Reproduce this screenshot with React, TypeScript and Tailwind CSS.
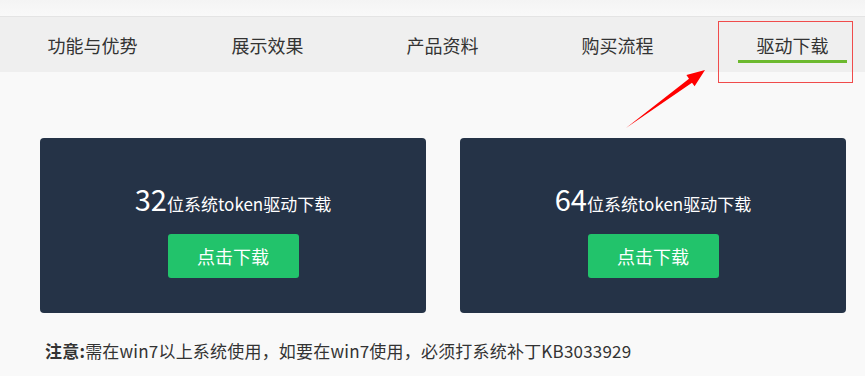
const NAV_ITEMS = [
  { label: "功能与优势" },
  { label: "展示效果" },
  { label: "产品资料" },
  { label: "购买流程" },
  { label: "驱动下载", active: true },
];

const DRIVERS = [
  { bits: "32", label: "位系统token驱动下载" },
  { bits: "64", label: "位系统token驱动下载" },
];

function DriverCard({ bits, label }: { bits: string; label: string }) {
  return (
    <div className="flex h-[175px] w-[386px] flex-col items-center rounded-[4px] bg-[#253347] pt-[44px]">
      <div className="flex h-[32px] items-baseline text-white">
        <span className="text-[29px] leading-[32px]">{bits}</span>
        <span className="text-[17px] leading-[32px]">{label}</span>
      </div>
      <button
        type="button"
        className="mt-[20px] flex h-[44px] w-[131px] items-center justify-center rounded-[3px] bg-[#22c36b] text-[18px] text-white"
      >
        点击下载
      </button>
    </div>
  );
}

export default function App() {
  return (
    <div className="relative h-[376px] w-[865px] overflow-hidden bg-[#f9f9f9] font-['Noto_Sans_CJK_SC','Noto_Sans',sans-serif] text-[#333]">
      {/* top strip */}
      <div className="h-[17px] border-b border-[#e4e4e4] bg-gradient-to-b from-[#f4f4f4] to-[#f9f9f9]" />

      {/* nav */}
      <nav className="flex h-[55px] bg-[#efefef] pl-[5px]">
        {NAV_ITEMS.map((item) => (
          <div key={item.label} className="flex w-[175px] shrink-0 flex-col items-center pt-[16px]">
            <span className="text-[18px] leading-[24px] text-[#333]">{item.label}</span>
            {item.active ? <span className="mt-[3px] h-[3px] w-[109px] bg-[#6cb92e]" /> : null}
          </div>
        ))}
      </nav>

      {/* download cards */}
      <div className="mt-[66px] flex gap-[34px] pl-[40px]">
        {DRIVERS.map((d) => (
          <DriverCard key={d.bits} bits={d.bits} label={d.label} />
        ))}
      </div>

      <p className="mt-[26px] pl-[45px] text-[17px] leading-[24px] tracking-[0.2px] text-[#333]">
        <span className="font-bold">注意:</span>需在win7以上系统使用，如要在win7使用，必须打系统补丁KB3033929
      </p>

      {/* annotation: red box + arrow */}
      <div className="pointer-events-none absolute left-[718px] top-[21px] h-[62px] w-[135px] border border-[#f04b4b]" />
      <svg className="pointer-events-none absolute inset-0" width="865" height="376" viewBox="0 0 865 376">
        <polygon
          points="626,128 689,78.7 686.4,75.1 705,70 694.6,86.3 692,82.7"
          fill="#ff0000"
        />
      </svg>
    </div>
  );
}
